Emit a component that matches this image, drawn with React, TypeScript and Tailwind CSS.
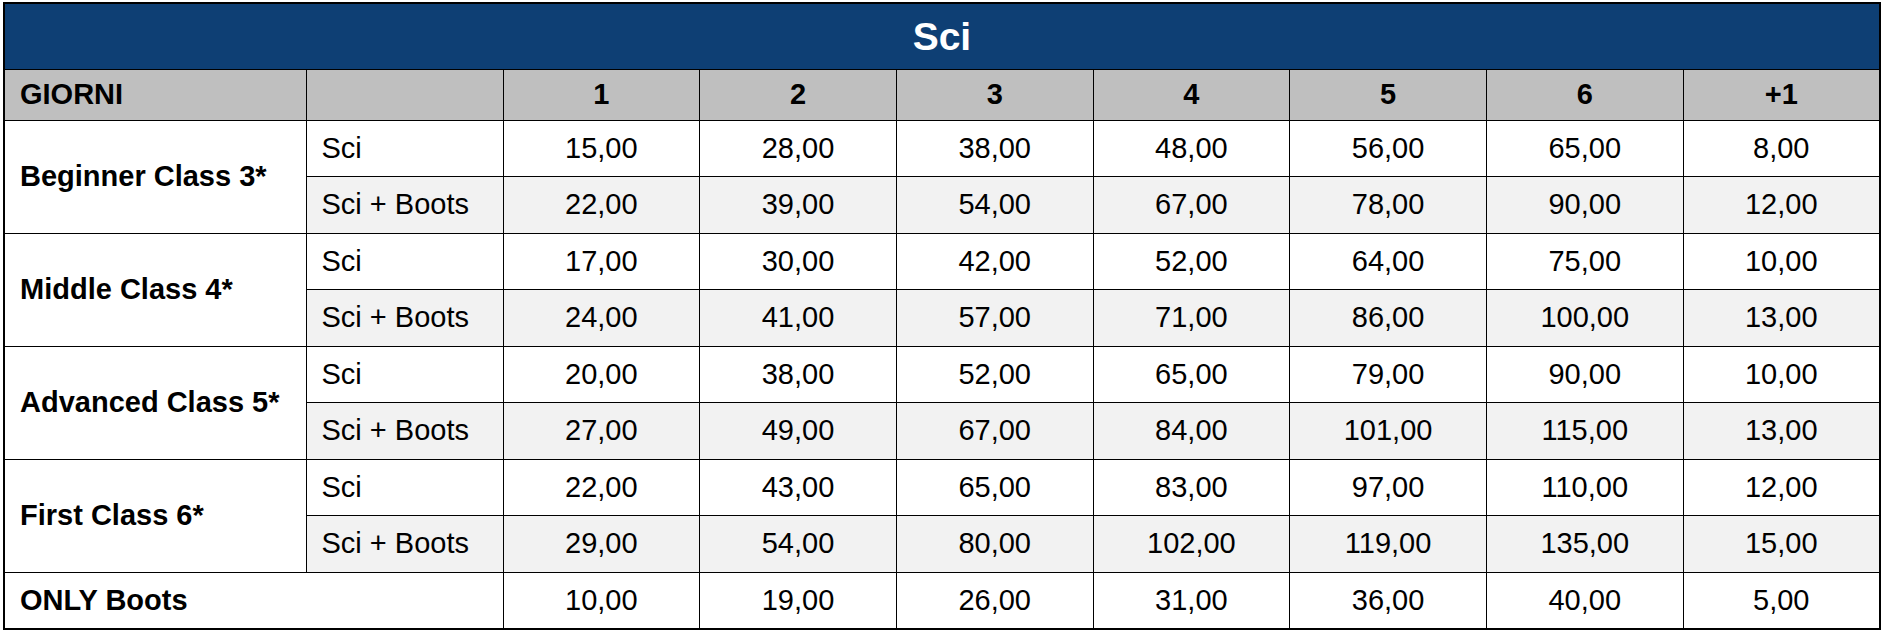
const DAYS = ["1", "2", "3", "4", "5", "6", "+1"]

type Group = {
  name: string
  sci: string[]
  boots: string[]
}

const GROUPS: Group[] = [
  {
    name: "Beginner Class 3*",
    sci: ["15,00", "28,00", "38,00", "48,00", "56,00", "65,00", "8,00"],
    boots: ["22,00", "39,00", "54,00", "67,00", "78,00", "90,00", "12,00"],
  },
  {
    name: "Middle Class 4*",
    sci: ["17,00", "30,00", "42,00", "52,00", "64,00", "75,00", "10,00"],
    boots: ["24,00", "41,00", "57,00", "71,00", "86,00", "100,00", "13,00"],
  },
  {
    name: "Advanced Class 5*",
    sci: ["20,00", "38,00", "52,00", "65,00", "79,00", "90,00", "10,00"],
    boots: ["27,00", "49,00", "67,00", "84,00", "101,00", "115,00", "13,00"],
  },
  {
    name: "First Class 6*",
    sci: ["22,00", "43,00", "65,00", "83,00", "97,00", "110,00", "12,00"],
    boots: ["29,00", "54,00", "80,00", "102,00", "119,00", "135,00", "15,00"],
  },
]

const ONLY_BOOTS = ["10,00", "19,00", "26,00", "31,00", "36,00", "40,00", "5,00"]

const cell = "border border-black px-[15px]"

export default function App() {
  return (
    <div className="min-h-screen bg-white pt-[2px] pl-[3px] font-['Liberation_Sans',Arial,sans-serif] text-black">
      <table className="w-[1876px] table-fixed border-collapse border-2 border-black text-[29px] leading-none">
        <colgroup>
          <col className="w-[302px]" />
          <col className="w-[197px]" />
          {DAYS.map((d) => (
            <col key={d} className="w-[196.7px]" />
          ))}
        </colgroup>
        <thead>
          <tr className="h-[66px]">
            <th colSpan={9} className="border border-black bg-[#0e3f74] text-center text-[39px] font-bold text-white">
              Sci
            </th>
          </tr>
          <tr className="h-[51px] bg-[#bfbfbf]">
            <th className={`${cell} text-left font-bold`}>GIORNI</th>
            <th className={cell}></th>
            {DAYS.map((d) => (
              <th key={d} className={`${cell} text-center font-bold`}>
                {d}
              </th>
            ))}
          </tr>
        </thead>
        <tbody>
          {GROUPS.map((g) => (
            <>
              <tr key={g.name + "a"} className="h-[56.5px]">
                <td rowSpan={2} className={`${cell} bg-white text-left font-bold`}>
                  {g.name}
                </td>
                <td className={`${cell} text-left`}>Sci</td>
                {g.sci.map((v, i) => (
                  <td key={i} className={`${cell} text-center`}>
                    {v}
                  </td>
                ))}
              </tr>
              <tr key={g.name + "b"} className="h-[56.5px] bg-[#f2f2f2]">
                <td className={`${cell} text-left`}>Sci + Boots</td>
                {g.boots.map((v, i) => (
                  <td key={i} className={`${cell} text-center`}>
                    {v}
                  </td>
                ))}
              </tr>
            </>
          ))}
          <tr className="h-[56.5px]">
            <td colSpan={2} className={`${cell} text-left font-bold`}>
              ONLY Boots
            </td>
            {ONLY_BOOTS.map((v, i) => (
              <td key={i} className={`${cell} text-center`}>
                {v}
              </td>
            ))}
          </tr>
        </tbody>
      </table>
    </div>
  )
}
